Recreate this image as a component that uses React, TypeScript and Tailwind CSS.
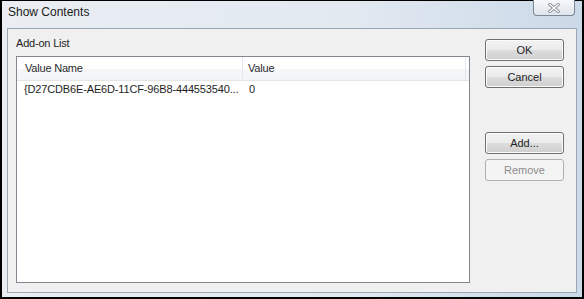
import React from 'react';

const font = { fontFamily: '"Liberation Sans", Arial, sans-serif' };

const DialogButton: React.FC<{ label: string; disabled?: boolean; className?: string }> = ({
  label,
  disabled,
  className = '',
}) => (
  <button
    disabled={disabled}
    className={`h-[22px] w-[79px] rounded-[3px] border text-[11px] leading-none ${
      disabled
        ? 'border-[#adb2b5] bg-[#f4f4f4] text-[#8d8d8d]'
        : 'border-[#707070] bg-[linear-gradient(to_bottom,#f2f2f2_0%,#ebebeb_50%,#dddddd_51%,#cfcfcf_100%)] text-[#1e1e1e] shadow-[inset_0_0_0_1px_#fcfcfc]'
    } ${className}`}
  >
    {label}
  </button>
);

const App: React.FC = () => {
  return (
    <div className="h-[299px] w-[584px] overflow-hidden bg-black px-[2px] pb-[2px] pt-[1px]" style={font}>
      {/* Window frame */}
      <div className="relative flex h-[296px] w-[580px] flex-col bg-[linear-gradient(to_right,#eaeef3,#e2e9f1_60%,#cbd9e8)]">
        {/* Title bar */}
        <div className="flex h-[27px] items-start pl-[6px] pt-[4px]">
          <span className="text-[12px] leading-[15px] text-[#1b1b1b]">Show Contents</span>
        </div>

        {/* Close button */}
        <div className="absolute right-[7px] top-[-1px] flex h-[16px] w-[42px] items-center justify-center rounded-b-[4px] border border-t-0 border-[#7c8796] bg-[linear-gradient(to_bottom,#f6f8fa,#dfe5ec)]">
          <svg width="12" height="10" viewBox="0 0 12 10">
            <path d="M2 1.5 L10 8.5 M10 1.5 L2 8.5" stroke="#8a939e" strokeWidth="3.2" strokeLinecap="square" />
            <path d="M2 1.5 L10 8.5 M10 1.5 L2 8.5" stroke="#ffffff" strokeWidth="1.4" strokeLinecap="square" />
          </svg>
        </div>

        {/* Client area */}
        <div className="mx-[5px] flex h-[265px] border border-[#9ba7b5] bg-[#f0f0f0]">
          {/* Left column */}
          <div className="flex flex-col pl-[8px] pt-[8px]">
            <span className="text-[11px] leading-[13px] tracking-[-0.2px] text-[#1e1e1e]">Add-on List</span>
            <div className="mt-[6px] flex h-[227px] w-[454px] flex-col border border-[#828790] bg-white">
              {/* Header */}
              <div className="flex h-[24px] border-b border-[#e5e5e5] bg-[linear-gradient(to_bottom,#ffffff_0%,#ffffff_50%,#f6f7f9_51%,#f3f4f6_100%)] text-[11px] leading-[23px] tracking-[-0.2px] text-[#2b2b2b]">
                <div className="w-[226px] border-r border-[#e3e8ee] pl-[8px]">Value Name</div>
                <div className="w-[223px] border-r border-[#e3e8ee] pl-[5px]">Value</div>
              </div>
              {/* Row */}
              <div className="flex h-[17px] pt-[1px] text-[11px] leading-[15px] text-[#1e1e1e]">
                <div className="w-[226px] whitespace-nowrap pl-[7px] tracking-[-0.15px]">
                  {'{D27CDB6E-AE6D-11CF-96B8-444553540...'}
                </div>
                <div className="pl-[6px]">0</div>
              </div>
            </div>
          </div>

          {/* Buttons column */}
          <div className="ml-[15px] flex flex-col pt-[10px]">
            <DialogButton label="OK" />
            <DialogButton label="Cancel" className="mt-[5px]" />
            <DialogButton label="Add..." className="mt-[44px]" />
            <DialogButton label="Remove" disabled className="mt-[5px]" />
          </div>
        </div>
      </div>
    </div>
  );
};

export default App;
